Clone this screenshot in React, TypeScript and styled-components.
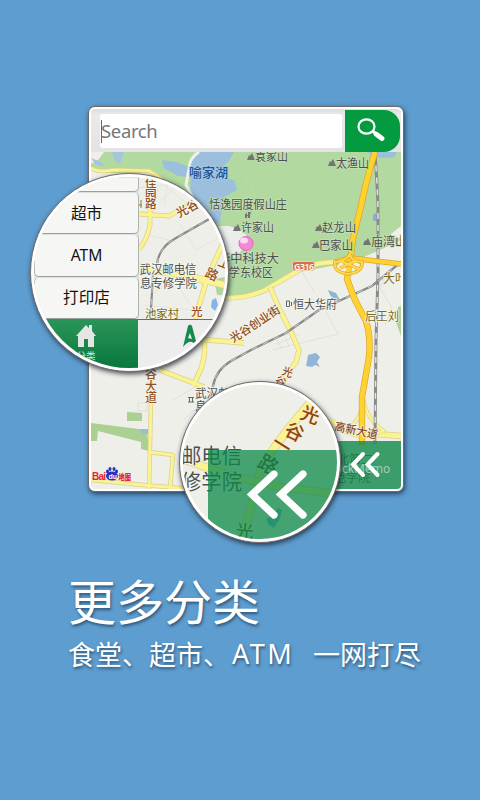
import React from 'react';
import styled, { createGlobalStyle } from 'styled-components';

const GlobalStyle = createGlobalStyle`
  html, body { margin: 0; padding: 0; background: #5e9dcf; }
  * { box-sizing: border-box; }
`;

const cjk = "'Noto Sans CJK SC', sans-serif";

const Page = styled.main`
  position: relative;
  width: 480px;
  height: 800px;
  overflow: hidden;
  padding: 106px 0 0 88px;
  background: #5e9dcf;
  font-family: 'Noto Sans', ${cjk};
`;

const Phone = styled.section`
  width: 316px;
  height: 386px;
  padding: 2px;
  border: 1px solid #6a6a6a;
  border-radius: 7px;
  background: #fff;
  box-shadow: 1px 2px 5px rgba(20, 35, 55, 0.75);
`;

const Screen = styled.div`
  position: relative;
  display: flex;
  flex-direction: column;
  height: 100%;
  overflow: hidden;
  border-radius: 4px;
`;

const SearchBar = styled.header`
  display: flex;
  height: 43px;
  padding: 1px 1px 0 9px;
  background: linear-gradient(#dedede, #eaeaea 15%, #e3e3e3);
`;

const SearchField = styled.div`
  display: flex;
  align-items: center;
  width: 242px;
  height: 34px;
  margin: 4px 3px 0 0;
  padding-left: 1px;
  border-radius: 3px;
  background: #fff;
  color: #777;
  font-size: 18.5px;
  line-height: 34px;
  letter-spacing: -0.35px;
`;

const Caret = styled.i`
  width: 1px;
  height: 23px;
  margin-right: -1px;
  background: #666;
`;

const SearchButton = styled.button`
  display: flex;
  align-items: center;
  justify-content: center;
  width: 55px;
  height: 42px;
  padding: 0 3px 3px 0;
  border: 0;
  border-radius: 0 16px 16px 0;
  background: #049a40;
`;

const MapArt = styled.svg`
  display: block;
  flex: none;
`;

const MemoPanel = styled.div`
  position: absolute;
  right: 0;
  bottom: 0;
  display: flex;
  align-items: center;
  width: 118px;
  height: 48px;
  padding: 6px 0 0 39px;
  background: rgba(15, 135, 74, 0.8);
`;

const MemoText = styled.span`
  color: rgba(225, 238, 225, 0.62);
  font-size: 12px;
  white-space: nowrap;
`;

const MemoIcon = styled.svg`
  position: absolute;
  left: 65px;
  top: 9px;
`;

const Lens = styled.div<{ $x: number; $y: number; $size: number }>`
  position: absolute;
  left: ${p => p.$x}px;
  top: ${p => p.$y}px;
  width: ${p => p.$size}px;
  height: ${p => p.$size}px;
  padding: 3px;
  border: 1px solid #706a6a;
  border-radius: 50%;
  background: #fff;
  box-shadow: 1px 2px 5px rgba(20, 30, 40, 0.8);
`;

const LensView = styled.div`
  display: flex;
  flex-direction: column;
  width: 100%;
  height: 100%;
  overflow: hidden;
  border-radius: 50%;
  background: #f0f0ec;
`;

const LensBody = styled.div`
  display: flex;
  height: 142px;
`;

const CategoryList = styled.div`
  flex: none;
  width: 105px;
  height: 142px;
  overflow: hidden;
  background: #dfe3e0;
`;

const Category = styled.div<{ $first?: boolean }>`
  display: flex;
  align-items: center;
  justify-content: center;
  height: ${p => (p.$first ? 15 : 42.3)}px;
  border: 1px solid #a9b5ae;
  border-top-color: #dde0dd;
  border-bottom: 1.5px solid #98a39d;
  border-radius: ${p => (p.$first ? '0 0 5px 5px' : '5px')};
  background: #f6f7f5;
  color: #111;
  font-size: 15.6px;
  line-height: 20px;
  padding-bottom: 1px;
`;

const TabBar = styled.nav`
  display: flex;
  height: 56px;
`;

const HomeTab = styled.div`
  display: flex;
  flex-direction: column;
  align-items: center;
  width: 104px;
  padding-top: 5px;
  background: linear-gradient(#2b9558, #08783e);
  color: #d6e8dc;
  font-size: 9.5px;
  line-height: 15px;
`;

const NavTab = styled.div`
  flex: 1;
  padding: 4px 0 0 42px;
  border-top: 1px solid #20965a;
  background: #ededed;
`;

const Caption = styled.section`
  margin: 77px 0 0 -20px;
  color: #fff;
  font-family: ${cjk};
  text-shadow: 1px 2px 3px rgba(30, 60, 90, 0.75);
`;

const Title = styled.h1`
  margin: 0;
  font-size: 48px;
  font-weight: 400;
  line-height: 60px;
`;

const Subtitle = styled.p`
  display: flex;
  margin: 6px 0 0;
  font-size: 27px;
  line-height: 38px;
`;

const Latin = styled.span`
  width: 83px;
  padding-left: 2px;
  font-family: 'Noto Sans', sans-serif;
  font-size: 27px;
  letter-spacing: 2.4px;
`;

type LabelProps = {
  x: number; y: number; children: string; w?: number;
  size?: number; color?: string; rotate?: number; halo?: string; weight?: number;
};

function Label({ x, y, children, w, size = 12, color = '#505050', rotate = 0, halo = '#f4f5ef', weight = 400 }: LabelProps) {
  return (
    <text
      x={x} y={y} fontSize={size} fontWeight={weight} fill={color} stroke={halo} strokeWidth={1.6} strokeLinejoin="round"
      paintOrder="stroke" textLength={w} lengthAdjust="spacingAndGlyphs"
      transform={rotate ? `rotate(${rotate} ${x} ${y})` : undefined}
      fontFamily={cjk}
    >
      {children}
    </text>
  );
}

function Column({ x, y, text, step = 12, size = 12 }: { x: number; y: number; text: string; step?: number; size?: number }) {
  return <>{[...text].map((c, i) => <Label key={i} x={x} y={y + i * step} size={size} weight={500} color="#96501b">{c}</Label>)}</>;
}

function Road({ d, w = 4, main = false }: { d: string; w?: number; main?: boolean }) {
  return (
    <g fill="none" strokeLinejoin="round">
      <path d={d} stroke={main ? '#dca530' : '#d8d08c'} strokeWidth={w + 1.4} />
      <path d={d} stroke={main ? '#ffd22e' : '#fbf391'} strokeWidth={w} />
    </g>
  );
}

function Rail({ d, w = 2 }: { d: string; w?: number }) {
  return (
    <g fill="none">
      <path d={d} stroke="#8a8a8a" strokeWidth={w + 1} />
      <path d={d} stroke="#e6e6e2" strokeWidth={w - 0.6} strokeDasharray="6 6" />
    </g>
  );
}

function Peak({ x, y }: { x: number; y: number }) {
  return <path d={`M${x} ${y}l2-5 1 1 2-3 3 7z`} fill="#727570" />;
}

function CityMap() {
  const lower = '#efefea';
  return (
    <MapArt width="310" height="337" viewBox="91 152 310 337">
      <rect x="91" y="152" width="310" height="337" fill={lower} />
      <path d="M91 152H401V240L380 250 352 262 300 272 262 293 232 299 205 300V230L165 182 150 173H98L91 169Z" fill="#b2d9a0" />
      <path d="M91 152H104L99 159 91 164Z" fill="#eeefe9" />
      <path d="M112 152h12l-2 5-2 7-5-3z" fill="#a3c5dd" />
      <path d="M91 158l10 4 4 4-9-1z" fill="#a3c5dd" />
      <path d="M198 152H234L229 161 222 167 225 177 235 181 237 190 224 197 220 222 200 230 190 192 191 177 178 176 164 168 162 160 176 162 187 166 193 157Z" fill="#9bbfdd" />
      <path d="M199 152q-10 6-10 17l-3 16 7 13" fill="none" stroke="#f0f1ea" strokeWidth="3" />
      <path d="M218 226l11 0 13 4 5 6 3 10-9 5-7 7-16-5z" fill="#ececea" />
      <path d="M368 152h29l-3 5-11 1-12-2z" fill="#9bbfdd" />
      <path d="M401 226l-10 8-4 4 14 0z" fill="#efefea" />
      <path d="M373 215l2-2 3 3-1 5-4 0z" fill="#85aedb" />
      <path d="M398 307l3-1v30l-5-14z" fill="#aad394" />
      <g fill="none" stroke="#bfdfae" strokeWidth="0.7">
        <path d="M260 152l18 32 32 32M309 180l-10 25M401 164l-30 30-20 11" strokeDasharray="2 3" />
        <path d="M243 174q17 21 14 44" />
      </g>
      <g fill="none" stroke="#dddcd6" strokeWidth="0.8">
        <path d="M301 270l14 23M388 270l-8 18 12 20-7 17M272 350l66-16-13-24M275 344l24-9m-18 13l-4-8m12 6l-4-8M173 400l27-16M138 403h9v8h-9zM184 420l8-9 18-2" />
      </g>
      <path d="M91 423L147 430 149 451 141 449 141 442 98 431 97 441H91Z" fill="#aad191" />
      <path d="M127 412L142 413V421H127Z" fill="#aad191" />
      <path d="M139 429h9v5h-5z" fill="#99bddd" />
      <path d="M328 290l8 3 4 7-3 2-7-7z" fill="#8eb6d9" />
      <path d="M308 355l8-2 4 4-3 5 3 5-5-2-3 2-6-1 1-5z" fill="#91b5d8" />

      <Road d="M91 168Q98 173 115 170L149 171Q163 178 169 189" w={3} />
      <Road d="M225 298Q248 298 265 290L301 269Q319 261 342 262" />
      <Road d="M270 287L279 308 291 332 299 350 296 362 285 377 279 392" />
      <Road d="M278 308L252 327" w={3} />
      <Road d="M196 339L244 343 M204 341Q206 354 201 369L193 386M160 370L204 387" />
      <Road d="M151 365V401L149 489M149 452L173 455 170 489M91 480L143 485 191 489" w={3} />
      <Road d="M330 421L350 432 401 436" w={5} />
      <Road d="M363 398Q362 424 342 431L363 438 384 431Q366 419 363 398" w={2.5} />

      <Rail d="M375 153Q377 180 378 205V274L376 340 375 444" />
      <Rail d="M401 262L372 286 319 310 286 333 251 350 231 361Q216 370 213 386L209 404 204 419" w={1.3} />
      <Road main w={5} d="M375 152Q366 181 361 206L353 239 350 262 347 279 355 300 366 321Q371 337 369 357L362 397V445" />
      <Road main w={4} d="M336 262Q350 256 367 260L401 264" />
      <g fill="none" stroke="#dba82f" strokeWidth="3.5">
        <path d="M350 254q-5 8-15 8q-2 10 13 12 15-2 14-12-11 0-12-8M340 268l15-7M359 269l-18-8" />
        <path stroke="#ffda42" strokeWidth="2" d="M350 254q-5 8-15 8q-2 10 13 12 15-2 14-12-11 0-12-8M340 268l15-7M359 269l-18-8" />
      </g>
      <g fill="#f0f0e4">
        <ellipse cx="341" cy="264" rx="2.2" ry="1.6" /><ellipse cx="356" cy="264" rx="2.2" ry="1.6" />
        <ellipse cx="345" cy="269.500" rx="1.500" ry="1.800" /><ellipse cx="353" cy="269.500" rx="1.500" ry="1.800" />
      </g>

      <Peak x={247} y={160} /><Peak x={328} y={166} /><Peak x={233} y={231} />
      <Peak x={315} y={231} /><Peak x={312} y={248} /><Peak x={363} y={245} />
      <Label x={189} y={177} size={13} w={39} weight={500} color="#17549d" halo="#a9c9df">喻家湖</Label>
      <Label x={255} y={161} w={33} halo="#c4e2b6">袁家山</Label>
      <Label x={336} y={167.5} w={33} halo="#c4e2b6">太渔山</Label>
      <Label x={209} y={208.5} w={78} halo="#c4e2b6">恬逸园度假山庄</Label>
      <path d="M245 218v-4l2-1v2h1v-3h3l-1 3v3h-2v-2h-1v2z" fill="#727570" />
      <Label x={241} y={232} w={33} halo="#c4e2b6">许家山</Label>
      <Label x={322} y={232} w={34} halo="#c4e2b6">赵龙山</Label>
      <Label x={319} y={249.5} w={34} halo="#c4e2b6">巴家山</Label>
      <Label x={371} y={246} w={36} halo="#c4e2b6">庙湾山</Label>
      <Label x={218} y={263} w={61} halo="#c4e2b6">华中科技大</Label>
      <Label x={229} y={277} w={44} halo="#c4e2b6">学东校区</Label>
      <rect x="292.5" y="261.5" width="22" height="9" rx="2" fill="#d96f45" stroke="#f0d2ab" />
      <text x="294" y="269.5" fontSize="8.8" textLength="20" fontWeight="600" fill="#fff" fontFamily="'Noto Sans', sans-serif">G316</text>
      <Label x={383} y={283} w={24} color="#756c17">大叶</Label>
      <Label x={365} y={320.5} w={34} color="#756c17">后王刘</Label>
      <path d="M286.500 301v5.500h3v-5.500zM291.500 302v4" fill="none" stroke="#666" />
      <Label x={293} y={308.5} w={44}>恒大华府</Label>
      <Label x={233} y={343} size={11.5} weight={500} color="#8d4b18" rotate={-33}>光谷创业街</Label>
      <Label x={281} y={374} size={11} weight={500} color="#96501b" rotate={20}>光</Label>
      <Label x={274} y={383} size={11} weight={500} color="#96501b" rotate={25}>谷</Label>
      <Column x={145} y={379} text="谷大道" step={11.5} size={12} />
      <path d="M188 397.500h6M188 402h6M189.500 397v5M192.500 397v5" fill="none" stroke="#666" />
      <Label x={195} y={397.5} w={58}>武汉邮电信</Label>
      <Label x={195} y={411} w={58}>息专修学院</Label>
      <Label x={334} y={430} size={11.5} w={44} weight={500} color="#8d4b18" rotate={12}>高新大道</Label>
      <Label x={337} y={464}>北第二</Label>
      <Label x={334} y={482}>范学院</Label>

      <circle cx="246" cy="243.5" r="7" fill="#f28ad3" stroke="#f75bc2" />
      <ellipse cx="244" cy="240.5" rx="4" ry="3" fill="#ffd9f2" />

      <text x="92" y="480" fontFamily="'Liberation Sans', sans-serif" fontWeight="700" fontSize="10" fill="#e22832" textLength="14">Bai</text>
      <g fill="#2932bf">
        <ellipse cx="112" cy="476" rx="6" ry="4.5" />
        <ellipse cx="107.5" cy="471.5" rx="1.5" ry="2.1" /><ellipse cx="110" cy="469" rx="1.5" ry="2" />
        <ellipse cx="114" cy="469" rx="1.5" ry="2" /><ellipse cx="116.5" cy="471.5" rx="1.5" ry="2.1" />
      </g>
      <text x="108.5" y="479" fontFamily="'Liberation Sans', sans-serif" fontWeight="700" fontSize="7" fill="#fff">du</text>
      <text x="118.5" y="480" fontFamily={cjk} fontWeight="900" fontSize="8" fill="#e22832" textLength="12.5" lengthAdjust="spacingAndGlyphs">地图</text>
    </MapArt>
  );
}

function DistrictMap() {
  return (
    <MapArt width="90" height="142" viewBox="139 177 90 142">
      <rect x="139" y="177" width="90" height="142" fill="#efefea" />
      <path d="M139 188l25-3 25 20m-31-17l-4 25m14-31l-4 23m11-18l-16 15M180 224l16 26 22-12M148 235l29 7M143 305l60 6M151 295l23-16 15 24" fill="none" stroke="#e2e1da" strokeWidth="0.800" />
      <path d="M214 279l17-3v20l-14-1z" fill="#b1d79e" />
      <Road d="M150 177V225Q147 240 139 249M139 214L169 216 198 199" w={3.5} />
      <Road d="M226 236L207 279 195 319M194 279L229 287M139 265Q160 276 188 275L229 285" w={4} />
      <Rail d="M157 264Q159 247 176 238L211 218M153 275L151 309" w={1.2} />
      <path d="M216 298l-4 2-1 7 4 4 3-6z" fill="#83b6e6" />
      <path d="M141 200v8M139 205h3" stroke="#95782a" />
      <Column x={145} y={187} text="佳园路" step={10.5} size={11.5} />
      <Label x={179} y={218} size={12} weight={500} color="#8f4d17" rotate={-29}>光谷</Label>
      <Label x={217} y={265} size={13} weight={500} color="#9b561b" rotate={22}>上</Label>
      <Label x={204} y={276} size={13} weight={500} color="#9b561b" rotate={24}>路</Label>
      <Label x={139.5} y={273.5} w={57}>武汉邮电信</Label>
      <Label x={140} y={288} w={57}>息专修学院</Label>
      <Label x={145} y={317.5} w={34} color="#756c17" size={11.5}>池家村</Label>
      <Label x={191} y={316} weight={500} color="#a34b1a" size={11.5}>光</Label>
    </MapArt>
  );
}

function CloseMap() {
  return (
    <MapArt width="154" height="154" viewBox="183 385 154 154">
      <rect x="183" y="385" width="154" height="154" fill="#efefea" />
      <Road d="M320 392Q285 430 262 466L242 539" w={7.5} />
      <Road d="M183 459L225 474 280 487 337 494" w={7} />
      <path d="M278 508l4 2-2 8-6 10-5-3-3-6 6-3z" fill="#84afe0" />
      <Label x={299} y={418} size={19} weight={500} color="#954315" rotate={20} halo="#f6efb8">光</Label>
      <Label x={283} y={434} size={19} weight={500} color="#954315" rotate={26} halo="#f6efb8">谷</Label>
      <Label x={270} y={446} size={19} weight={500} color="#954315" rotate={32} halo="#f6efb8">一</Label>
      <Label x={256} y={466} size={20} weight={500} color="#5b481f" rotate={30}>路</Label>
      <Label x={235} y={537} size={18} color="#5b481f" rotate={6}>光</Label>
      <Label x={181} y={462.5} size={21} w={61} color="#4f504e">邮电信</Label>
      <Label x={181} y={488.5} size={21} w={61} color="#4f504e">修学院</Label>
      <rect x="208" y="450" width="130" height="90" fill="#098848" fillOpacity="0.74" />
      <path d="M274 474L252 494.500 274 515M303 474L281 494.500 303 515" fill="none" stroke="#fff" strokeWidth="7.200" strokeLinejoin="miter" strokeLinecap="round" />
    </MapArt>
  );
}

export default function App() {
  return (
    <>
      <GlobalStyle />
      <Page>
        <Phone>
          <Screen>
            <SearchBar>
              <SearchField><Caret />Search</SearchField>
              <SearchButton aria-label="Search">
                <svg width="28" height="25" viewBox="0 0 28 25" fill="none" stroke="#fff">
                  <ellipse cx="9.500" cy="9.500" rx="8" ry="7.200" strokeWidth="2.200" />
                  <path d="M15 14l4 2.500" strokeWidth="3" />
                  <path d="M19 17l6 4.500" strokeWidth="4.800" strokeLinecap="round" />
                </svg>
              </SearchButton>
            </SearchBar>
            <CityMap />
            <MemoPanel>
              <MemoText>QuickMemo</MemoText>
              <MemoIcon width="36" height="32" viewBox="0 0 36 32" fill="none" stroke="#fff" strokeWidth="4">
                <path strokeLinecap="round" d="M15 4L5 14.500 15 25M29.500 4L19.500 14.500 29.500 25" />
              </MemoIcon>
            </MemoPanel>
          </Screen>
        </Phone>

        <Lens $x={30} $y={173} $size={199}>
          <LensView>
            <LensBody>
              <CategoryList>
                <Category $first />
                <Category>超市</Category>
                <Category>ATM</Category>
                <Category>打印店</Category>
              </CategoryList>
              <DistrictMap />
            </LensBody>
            <TabBar>
              <HomeTab>
                <svg width="20" height="24" viewBox="0 0 20 24">
                  <path d="M0 12L10 1l3 3V1h3v6l4 5h-2v11h-6v-8H8v8H2V12z" fill="#e4e6e6" />
                </svg>
                分类
              </HomeTab>
              <NavTab>
                <svg width="20" height="24" viewBox="0 0 20 24">
                  <path d="M3 23L8 2q2-3 4 0l5 19-5-3q-4-1-9 5zM8 14l4 1-2-6z" fill="#168a4c" fillRule="evenodd" />
                </svg>
              </NavTab>
            </TabBar>
          </LensView>
        </Lens>

        <Lens $x={179} $y={381} $size={162}>
          <LensView><CloseMap /></LensView>
        </Lens>

        <Caption>
          <Title>更多分类</Title>
          <Subtitle>食堂、超市、<Latin>ATM</Latin>一网打尽</Subtitle>
        </Caption>
      </Page>
    </>
  );
}
